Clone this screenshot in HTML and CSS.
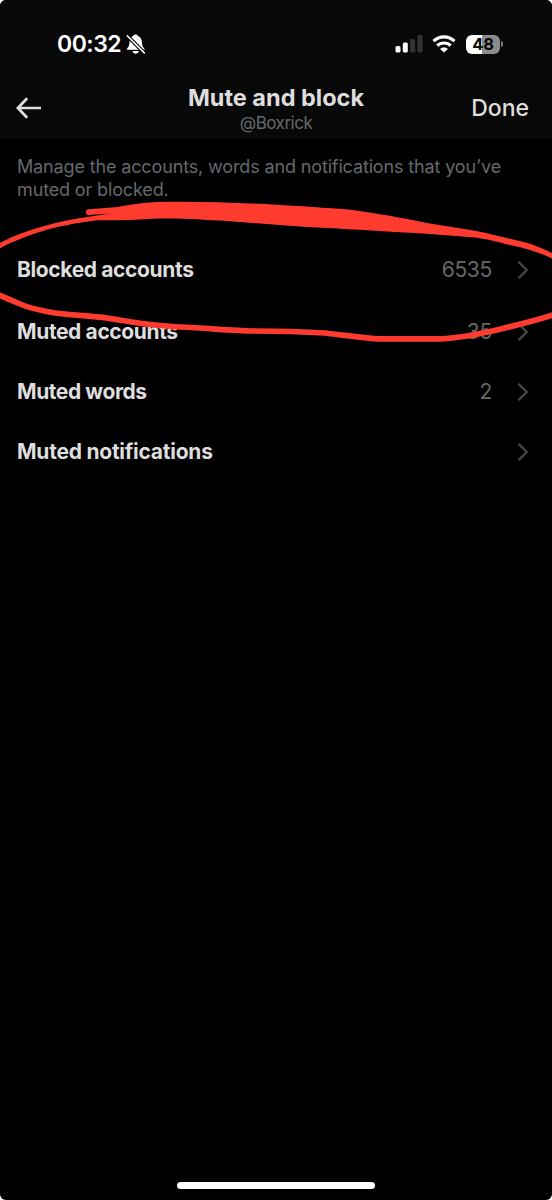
FILE: index.html
```html
<!DOCTYPE html>
<html lang="en">
<head>
<meta charset="utf-8">
<title>Mute and block</title>
<link rel="stylesheet" href="styles.css">
</head>
<body>
<main class="screen">
  <header class="top">
    <div class="status">
      <span class="time">00:32</span>
      <svg class="bell" width="20" height="20" viewBox="0 0 20 20">
        <path d="M.8 15.800c0-1.800 2.300-2.500 2.500-6C3.500 5.500 4.700 3 7 2.100C7.500-.1 11.500-.1 12 2.100c2.600 .9 3.900 3.400 4.100 7.700 .2 3.500 2.600 4.200 2.600 6z" fill="#fff"/>
        <path d="M6.500 17h6.200c-.6 3.500-5.600 3.500-6.200 0z" fill="#fff"/>
        <path d="M0 .6 19 19.600" stroke="#080808" stroke-width="3.800"/>
        <path d="M1.200 1.800 18.300 18.900" stroke="#fff" stroke-width="1.500" stroke-linecap="round"/>
      </svg>
      <svg class="signal" width="28" height="18" viewBox="0 0 28 18">
        <rect x="0.500" y="11" width="5" height="6.500" rx="1.500" fill="#fff"/>
        <rect x="7.800" y="7.500" width="5" height="10" rx="1.500" fill="#fff"/>
        <rect x="15.100" y="4" width="5" height="13.500" rx="1.500" fill="#333"/>
        <rect x="22.500" y="0" width="5" height="17.500" rx="1.500" fill="#333"/>
      </svg>
      <svg class="wifi" width="24" height="18" viewBox="0 0 24 18">
        <g fill="none" stroke="#fff" stroke-width="3.100">
          <path d="M1.500 6.200a15 15 0 0 1 21 0"/>
          <path d="M5.300 10.700a9.600 9.600 0 0 1 13.400 0"/>
        </g>
        <path d="M12 17.600 8 13.900q4-3.100 8 0z" fill="#fff"/>
      </svg>
      <div class="battery"><span>48</span></div>
      <i class="nub"></i>
    </div>
    <nav class="bar">
      <svg class="back" width="26" height="22" viewBox="0 0 26 22">
        <path d="M11.200 1.300 1.900 11l9.300 9.700M2 11h23" fill="none" stroke="#dedede" stroke-width="2.700"/>
      </svg>
      <div class="titles">
        <h1>Mute and block</h1>
        <p>@Boxrick</p>
      </div>
      <span class="done">Done</span>
    </nav>
  </header>
  <p class="intro">Manage the accounts, words and notifications that you’ve<br>muted or blocked.</p>
  <section class="list">
    <div class="row blocked"><span class="label l1">Blocked accounts</span><span class="count">6535</span><svg class="chev" width="12" height="20" viewBox="0 0 12 20"><path d="M1.500 1.800 9.700 10l-8.200 8.200"/></svg></div>
    <div class="row"><span class="label l2">Muted accounts</span><span class="count">35</span><svg class="chev" width="12" height="20" viewBox="0 0 12 20"><path d="M1.500 1.800 9.700 10l-8.200 8.200"/></svg></div>
    <div class="row"><span class="label l3">Muted words</span><span class="count">2</span><svg class="chev" width="12" height="20" viewBox="0 0 12 20"><path d="M1.500 1.800 9.700 10l-8.200 8.200"/></svg></div>
    <div class="row"><span class="label l4">Muted notifications</span><svg class="chev" width="12" height="20" viewBox="0 0 12 20"><path d="M1.500 1.800 9.700 10l-8.200 8.200"/></svg></div>
  </section>
  <div class="home"></div>
  <svg class="marker" width="552" height="150" viewBox="0 200 552 150">
    <path fill="#ff3b30" d="M88 209.200L115 207.300C125 206 137 202.600 157 201.900C195 201 235 202.500 276 204.700C300 206 315 207 327 208C350 209 366 212 385 215C402 218 415 220.500 430 223.500L475 230.700C488 233 502 237 515 240C530 243 542 248 552 253V258.500C542 253.500 527 248.500 510 245C498 242 488 239 475 237.500L430 234C400 232 380 231 360 229.700C330 228 305 227 276 224.700L220 220.600C195 219 175 218.300 157 218.500C137 220 117 220.500 97 220.300C82 222 70 224.500 60 226.600C45 229.500 17 239 0 248.500V243C15 235 32 229 50 224.500C66 220 90 216 112 213.500L88 215C85 214.500 85 210 88 209.200Z"/>
    <path fill="none" stroke="#ff3b30" stroke-width="5.700" d="M-3 294C6 298 13 301 20 304C31 309 43 311 55 313C70 315 86 315.500 100 317.200C115 319 127 321.500 140 323.300C154 325 167 326.500 180 327C205 328 232 330.500 252 331C278 331 300 331.500 325 333C344 335 361 338 378 338.800H440C460 338 480 334 500 329.200C522 324 538 320 556 314"/>
  </svg>
</main>
</body>
</html>
```
FILE: styles.css
```css
* { box-sizing: border-box; }
body { margin: 0; background: #fff; font-family: Inter, "Liberation Sans", sans-serif; }
h1, p { margin: 0; }
.screen { position: relative; width: 552px; height: 1200px; background: #000; border-radius: 6px; overflow: hidden; display: flex; flex-direction: column; }
.top { height: 139px; background: #080808; flex: none; }
.status { height: 76px; padding: 12px 49px 0 57px; display: flex; align-items: center; color: #fff; }
.time { width: 69px; font-size: 23px; font-weight: 600; letter-spacing: -.5px; line-height: 28px; white-space: nowrap; }
.bell { margin-right: auto; }
.signal { margin-right: 9px; }
.wifi { margin-right: 10px; }
.battery { width: 34px; height: 19px; border-radius: 6px; background: linear-gradient(90deg, #fff 48%, #8b8b8b 48%); color: #080808; display: flex; align-items: center; justify-content: center; font-size: 16.5px; font-weight: 700; line-height: 19px; letter-spacing: -.2px; }
.nub { width: 2px; height: 6px; margin-left: 1px; border-radius: 0 3px 3px 0; background: #777; }
.bar { height: 63px; padding: 0 23px 0 16px; display: grid; grid-template-columns: 80px 1fr 73px; align-items: center; color: #dedede; }
.titles { text-align: center; white-space: nowrap; }
.titles h1 { font-size: 23.5px; line-height: 28px; font-weight: 700; letter-spacing: 0; margin-top: 3px; }
.titles p { font-size: 17px; line-height: 22px; color: #65686b; letter-spacing: -.5px; }
.done { text-align: right; font-size: 23px; line-height: 28px; font-weight: 500; }
.intro { padding: 16px 0 0 17px; font-size: 18px; line-height: 23px; color: #66696c; white-space: nowrap; letter-spacing: -.14px; }
.list { padding: 37px 24px 0 17px; }
.row { height: 60px; display: flex; align-items: center; font-size: 21px; line-height: 28px; }
.row.blocked { height: 64px; }
.label { font-weight: 650; color: #dedede; white-space: nowrap; margin-right: auto; }
.l1 { letter-spacing: -.37px; }
.l2 { letter-spacing: -.38px; }
.l3 { letter-spacing: -.42px; }
.l4 { letter-spacing: -.24px; }
.count { color: #66696c; letter-spacing: -.3px; margin-right: 25px; }
.chev { margin-right: -1px; fill: none; stroke: #48494b; stroke-width: 2.300; }
.home { width: 198px; height: 7px; margin: auto auto 11px 177px; border-radius: 4px; background: #fff; }
.marker { position: absolute; left: 0; top: 200px; }
```
